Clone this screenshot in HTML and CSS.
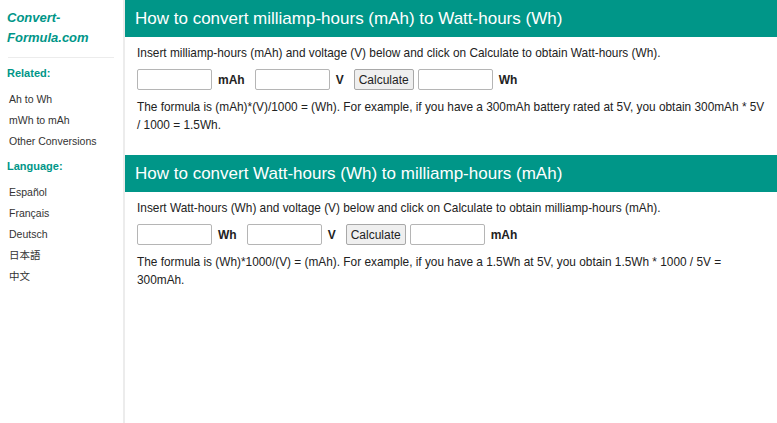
FILE: index.html
```html
<!DOCTYPE html>
<html lang="en">
<head>
<meta charset="utf-8">
<title>mAh to Wh</title>
<link rel="stylesheet" href="styles.css">
</head>
<body>
<div class="page">
  <aside class="sidebar">
    <div class="brand">Convert-Formula.com</div>
    <div class="divider"></div>
    <div class="side-title side-title-first">Related:</div>
    <ul class="side-links">
      <li>Ah to Wh</li>
      <li>mWh to mAh</li>
      <li>Other Conversions</li>
    </ul>
    <div class="side-title">Language:</div>
    <ul class="side-links">
      <li>Español</li>
      <li>Français</li>
      <li>Deutsch</li>
      <li>日本語</li>
      <li>中文</li>
    </ul>
  </aside>
  <main class="main">
    <section class="section">
      <h2 class="section-title">How to convert milliamp-hours (mAh) to Watt-hours (Wh)</h2>
      <div class="section-body">
        <p class="intro">Insert milliamp-hours (mAh) and voltage (V) below and click on Calculate to obtain Watt-hours (Wh).</p>
        <div class="calc-row">
          <input class="field" type="text"><span class="unit">mAh</span>
          <input class="field" type="text"><span class="unit">V</span>
          <button class="calc-btn" type="button">Calculate</button>
          <input class="field" type="text"><span class="unit">Wh</span>
        </div>
        <p class="formula">The formula is (mAh)*(V)/1000 = (Wh). For example, if you have a 300mAh battery rated at 5V, you obtain 300mAh * 5V / 1000 = 1.5Wh.</p>
      </div>
    </section>
    <section class="section">
      <h2 class="section-title">How to convert Watt-hours (Wh) to milliamp-hours (mAh)</h2>
      <div class="section-body">
        <p class="intro">Insert Watt-hours (Wh) and voltage (V) below and click on Calculate to obtain milliamp-hours (mAh).</p>
        <div class="calc-row">
          <input class="field" type="text"><span class="unit">Wh</span>
          <input class="field" type="text"><span class="unit">V</span>
          <button class="calc-btn" type="button">Calculate</button>
          <input class="field" type="text"><span class="unit">mAh</span>
        </div>
        <p class="formula">The formula is (Wh)*1000/(V) = (mAh). For example, if you have a 1.5Wh at 5V, you obtain 1.5Wh * 1000 / 5V = 300mAh.</p>
      </div>
    </section>
  </main>
</div>
</body>
</html>
```

FILE: styles.css
```css
html, body {
  margin: 0;
  padding: 0;
  background: #ffffff;
}
body {
  font-family: "Liberation Sans", Arial, "Noto Sans CJK SC", sans-serif;
  color: #222222;
}
.page {
  display: flex;
  min-height: 423px;
}
.sidebar {
  width: 123px;
  flex: 0 0 123px;
  border-right: 2px solid #ececec;
  box-sizing: content-box;
}
.brand {
  padding: 8px 0 0 7px;
  font-size: 13px;
  line-height: 20px;
  font-weight: bold;
  font-style: italic;
  color: #009688;
}
.divider {
  height: 1px;
  background: #ececec;
  margin: 9px 9px 0 8px;
}
.side-title {
  padding-left: 7px;
  font-size: 11px;
  line-height: 16px;
  font-weight: bold;
  color: #009688;
  margin-top: 6px;
}
.side-title-first {
  margin-top: 7px;
}
.side-links {
  list-style: none;
  margin: 8px 0 0 0;
  padding: 0 0 0 9px;
  font-size: 10.5px;
  line-height: 21px;
  color: #333333;
}
.main {
  flex: 1;
}
.section {
  height: 155px;
}
.section-title {
  margin: 0;
  height: 37px;
  line-height: 37px;
  padding-left: 10px;
  background: #009688;
  color: #ffffff;
  font-size: 17px;
  font-weight: normal;
  white-space: nowrap;
  overflow: hidden;
}
.section-body {
  padding: 0 8px 0 12px;
}
.intro {
  margin: 7px 0 0 0;
  font-size: 11.85px;
  line-height: 18px;
}
.calc-row {
  display: flex;
  align-items: center;
  margin-top: 7px;
  height: 21px;
}
.field {
  width: 75px;
  height: 21px;
  box-sizing: border-box;
  border: 1px solid #b5b5b5;
  border-radius: 2px;
  padding: 0 4px;
  margin: 0;
  font-size: 12px;
  background: #ffffff;
}
.unit {
  font-size: 12px;
  font-weight: bold;
  margin: 0 10px 0 6px;
}
.calc-btn {
  height: 21px;
  box-sizing: border-box;
  padding: 0 4px;
  margin: 0 4px 0 0;
  border: 1px solid #a8a8a8;
  border-radius: 2px;
  background: #efefef;
  font-family: "Liberation Sans", Arial, sans-serif;
  font-size: 12px;
  color: #222222;
}
.formula {
  margin: 8px 0 0 0;
  font-size: 11.85px;
  line-height: 18px;
}
```
